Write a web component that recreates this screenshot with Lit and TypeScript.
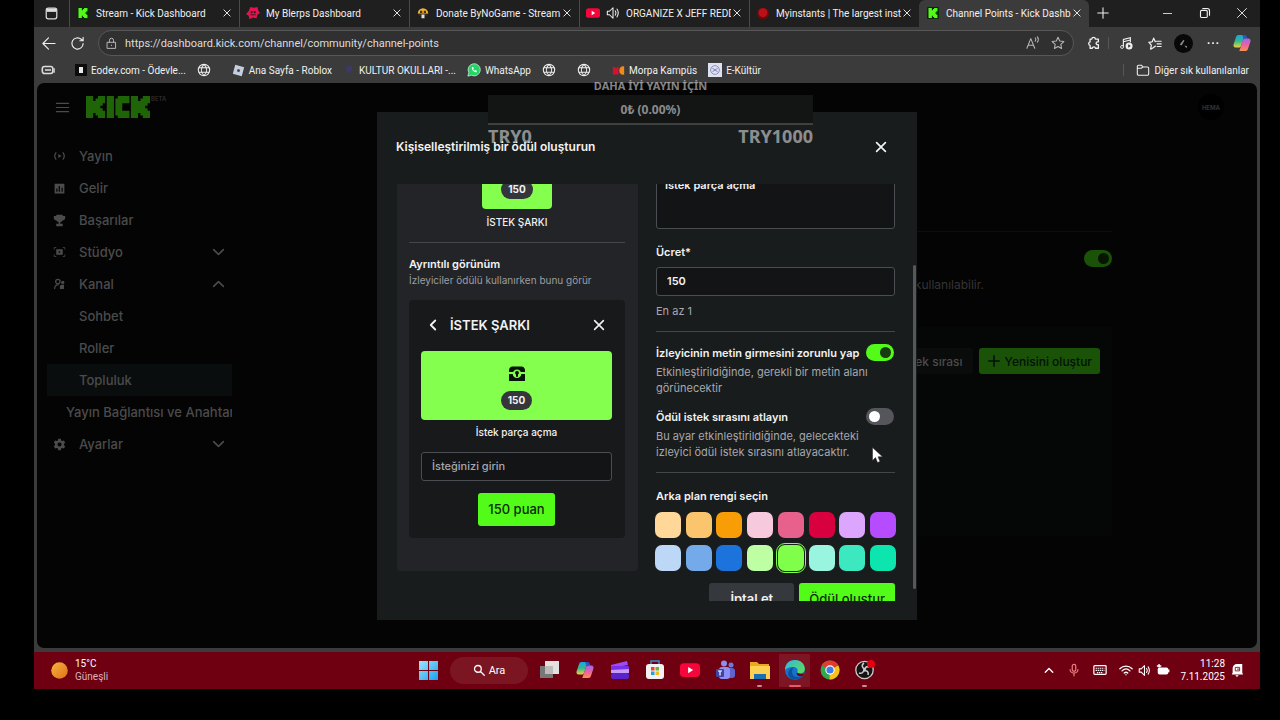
import { LitElement, html, css, svg, nothing, TemplateResult } from "lit";
import { customElement, query } from "lit/decorators.js";
import { classMap } from "lit/directives/class-map.js";

const K = "M0 0h3v2h1v-1h1v-1h3v3h-1v1h-1v1h1v1h1v3h-3v-1h-1v-1h-1v2h-3z";

const icon = (size: number, box: string, body: TemplateResult) =>
  html`<svg class="icon" width=${size} height=${size} viewBox=${box} fill="none" aria-hidden="true">${body}</svg>`;

const line = (size: number, d: string, w = 1.2) =>
  icon(size, "0 0 16 16", svg`<path d=${d} stroke="currentColor" stroke-width=${w} stroke-linecap="round" stroke-linejoin="round"/>`);

const solid = (size: number, d: string) =>
  icon(size, "0 0 16 16", svg`<path d=${d} fill="currentColor" fill-rule="evenodd"/>`);

const closeIcon = (size: number, w = 1.5) => line(size, "M3 3l10 10M13 3L3 13", w);

const kickIcon = icon(12, "0 0 12 12", svg`<rect width="12" height="12" rx="1" fill="#0b2a05"/><path transform="translate(1.500 1) scale(1.120)" d=${K} fill="#53fc18"/>`);
const blerpIcon = icon(14, "0 0 16 16", svg`<path d="M5 1l4 1 4-1 1 4 2 3-3 2-1 4-4-1-4 2-1-4-3-2 3-3z" fill="#e5134f"/><circle cx="6.500" cy="7" r="1.300" fill="#40101e"/><circle cx="10" cy="7" r="1.300" fill="#40101e"/><path d="M5 10h6" stroke="#40101e"/>`);
const donateIcon = icon(12, "0 0 16 16", svg`<path d="M1 9a7 7.500 0 0 1 14 0z" fill="#efb52e"/><path d="M1 9h14l-2 3H3z" fill="#3b2a1d"/><path d="M4 5h3v3H4zM9 5h3v3H9z" fill="#4a2c19"/><path d="M6 10h4v5H6z" fill="#e8e0d2"/>`);
const ytIcon = (s: number) => icon(s, "0 0 16 16", svg`<rect y="2.500" width="16" height="11" rx="3" fill="#f5063b"/><path d="M6.500 5.500v5l4-2.500z" fill="#fff"/>`);
const instantIcon = icon(13, "0 0 16 16", svg`<circle cx="8" cy="8" r="7.500" fill="#6d0a0e"/><circle cx="8" cy="7" r="5.500" fill="#b81119"/>`);
const globeIcon = line(14, "M1.500 8a6.500 6.500 0 1 0 13 0a6.500 6.500 0 1 0-13 0M2 5.500h12M2 10.500h12M8 1.500c-4 4-4 9 0 13c4-4 4-9 0-13", 1.2);
const copilotIcon = (s: number) => icon(s, "0 0 20 20", svg`
  <defs>
    <linearGradient id="cpa" x1="0" y1="0" x2="0" y2="1"><stop offset="0" stop-color="#18a6e8"/><stop offset=".5" stop-color="#35b98d"/><stop offset="1" stop-color="#f0d13c"/></linearGradient>
    <linearGradient id="cpb" x1="0" y1="0" x2="0" y2="1"><stop offset="0" stop-color="#9a6bf0"/><stop offset=".5" stop-color="#ee5fa3"/><stop offset="1" stop-color="#f7944c"/></linearGradient>
  </defs>
  <path d="M6 1h7l-4 12c-.5 1.500-1.500 2-3 2H3c-2 0-3-1.500-2.300-3.500l2.600-8C3.900 1.800 4.700 1 6 1z" fill="url(#cpa)"/>
  <path d="M10 1h3c1.500 0 2 1 2.400 2.300L16 5h-4z" fill="#2557c9"/>
  <path d="M14 5h3c2 0 3 1.500 2.300 3.500l-2.600 8c-.6 1.700-1.400 2.500-2.700 2.500H7l4-12c.5-1.500 1.500-2 3-2z" fill="url(#cpb)"/>`);
const chestIcon = icon(18, "0 0 18 18", svg`
  <path d="M1 7V5c.3-2 1.500-3.500 3.500-3.500h9C15.500 1.500 16.700 3 17 5v2zM1 9h16v7H1z" fill="#07140a"/>
  <circle cx="9" cy="8.800" r="4.300" fill="#84ff4d"/>
  <path d="M9 5.800a2 2 0 0 0-1 3.700v2.300h2V9.500a2 2 0 0 0-1-3.700z" fill="#07140a"/>`);

interface Tab { title: string; icon: TemplateResult; sound?: boolean; active?: boolean }
const TABS: Tab[] = [
  { title: "Stream - Kick Dashboard", icon: kickIcon },
  { title: "My Blerps Dashboard", icon: blerpIcon },
  { title: "Donate ByNoGame - Stream", icon: donateIcon },
  { title: "ORGANIZE X JEFF REDD", icon: ytIcon(14), sound: true },
  { title: "Myinstants | The largest inst", icon: instantIcon },
  { title: "Channel Points - Kick Dashb", icon: kickIcon, active: true },
];

const BOOKMARKS: { title?: string; icon: TemplateResult }[] = [
  { title: "Eodev.com - Ödevle...", icon: icon(12, "0 0 12 12", svg`<rect width="12" height="12" fill="#0d0d0d"/><path d="M4 3h4v6H4z" fill="#e9e9e9"/>`) },
  { icon: globeIcon },
  { title: "Ana Sayfa - Roblox", icon: icon(13, "0 0 16 16", svg`<path d="M4 1l11 3-3 11L1 12z" fill="#c6cede"/><path d="M7 6l3 1-1 3-3-1z" fill="#3b4252"/>`) },
  { title: "KULTUR OKULLARI -...", icon: icon(12, "0 0 12 12", svg`<path d="M3 2h6v5l-3 3-3-3z" fill="#3a3a63"/>`) },
  { title: "WhatsApp", icon: icon(14, "0 0 16 16", svg`<path d="M1 15l1-4a7 7 0 1 1 3 3z" fill="#25d366" stroke="#d8f5e2" stroke-width=".8"/><path d="M5.500 5c0 3 2.500 5.500 5.500 5.500l.5-1.500-2-1-1 .8L7 7.200l.7-1-.7-1.900z" fill="#fff"/>`) },
  { icon: globeIcon },
  { icon: globeIcon },
  { title: "Morpa Kampüs", icon: icon(13, "0 0 16 16", svg`<path d="M1 3l4 2 3-2v10H1z" fill="#d3122b"/><path d="M15 3v10c-3 1-6-1-6-5s3-6 6-5z" fill="#f08a1d"/>`) },
  { title: "E-Kültür", icon: icon(14, "0 0 16 16", svg`<rect width="16" height="16" fill="#dfe1f0"/><circle cx="8" cy="8" r="5" stroke="#8286b8"/><path d="M5 6l6 4M5 10l6-4" stroke="#6f73ac"/>`) },
];

interface NavItem { label: string; icon?: TemplateResult; arrow?: "up" | "down"; sub?: boolean; active?: boolean; long?: boolean }
const NAV: NavItem[] = [
  { label: "Yayın", icon: icon(14, "0 0 16 16", svg`<path d="M4 3.500a7 7 0 0 0 0 9M12 3.500a7 7 0 0 1 0 9" stroke="currentColor" stroke-width="1.500"/><path d="M6.500 5.500v5l4-2.500z" fill="currentColor"/>`) },
  { label: "Gelir", icon: solid(13, "M2 2h12v12H2zM4 8v4h1.500V8zM7 5v7h1.500V5zM10.500 7v5H12V7z") },
  { label: "Başarılar", icon: solid(13, "M4 1h8v1.500h3V5c0 2-1.500 3-3.500 3.200-.6 1-1.500 1.600-2.500 1.800v2h3V15H4v-3h3v-2c-1-.2-1.900-.8-2.500-1.800C2.500 8 1 7 1 5V2.500h3z") },
  { label: "Stüdyo", icon: icon(14, "0 0 16 16", svg`<path d="M1.500 5V2.500H4M12 2.500h2.500V5M14.500 11v2.500H12M4 13.500H1.500V11" stroke="currentColor"/><path fill-rule="evenodd" d="M4 4.500h8v7H4zM7 6.500v3l2.500-1.500z" fill="currentColor"/>`), arrow: "down" },
  { label: "Kanal", icon: icon(14, "0 0 16 16", svg`<circle cx="6" cy="5" r="2.700" stroke="currentColor" stroke-width="1.500"/><path d="M2 14c0-3 1.500-5 4-5h1" stroke="currentColor" stroke-width="1.500"/><circle cx="12" cy="6" r="2" fill="currentColor"/><path d="M8.500 14v-3a2 2 0 0 1 2-2h3v5z" fill="currentColor"/>`), arrow: "up" },
  { label: "Sohbet", sub: true },
  { label: "Roller", sub: true },
  { label: "Topluluk", sub: true, active: true },
  { label: "Yayın Bağlantısı ve Anahtar", long: true },
  { label: "Ayarlar", icon: solid(13, "M6.500 1h3l.5 2 1.500.8 2-.6 1.500 2.600L13.500 7.200v1.600l1.500 1.400-1.500 2.600-2-.6-1.500.8-.5 2h-3L6 13l-1.500-.8-2 .6L1 10.200l1.500-1.400V7.200L1 5.800l1.500-2.600 2 .6L6 3zM8 5.500a2.500 2.500 0 1 0 0 5a2.500 2.500 0 0 0 0-5z"), arrow: "down" },
];

const COLORS = [
  "#ffd899", "#fbc56d", "#f99d07", "#f7c9dc", "#e8608c", "#d9003f", "#dca6ff", "#b64cff",
  "#bdd7f7", "#75aaea", "#1d73dc", "#bdffa2", "#80ff4a", "#99f5df", "#3be8c0", "#0ce5ae",
];

const APPS: { name: string; icon: TemplateResult; state?: "open" | "focused" }[] = [
  { name: "Görev görünümü", icon: icon(20, "0 0 20 20", svg`<path d="M0 6h13v12H0z" fill="#777"/><path d="M5 1h14v13H5z" fill="#e3e0e0"/><path d="M5 6h8v8H5z" fill="#bdbaba"/>`) },
  { name: "Copilot", icon: copilotIcon(18) },
  { name: "Clipchamp", icon: icon(20, "0 0 20 20", svg`<path d="M1 5l16-4 1 4-11 2H1z" fill="#9c4df2"/><rect x="1" y="6" width="18" height="6" rx="1" fill="#7a2fe8"/><path d="M1 10l18-1v4H1z" fill="#c79bf7"/><rect x="1" y="13" width="18" height="6" rx="2" fill="#5a22c9"/>`) },
  { name: "Store", icon: icon(20, "0 0 20 20", svg`<path d="M6 5V1h8v4" stroke="#3b8fd0" stroke-width="1.500"/><rect x="1" y="4" width="18" height="15" rx="3" fill="#f4f1f1"/><path d="M6 7h3.500v3.500H6z" fill="#e5482d"/><path d="M10.500 7H14v3.500h-3.500z" fill="#6cb33f"/><path d="M6 11.500h3.500V15H6z" fill="#2a9de0"/><path d="M10.500 11.500H14V15h-3.500z" fill="#f5b921"/>`) },
  { name: "YouTube", icon: ytIcon(20) },
  { name: "Teams", icon: icon(20, "0 0 20 20", svg`<circle cx="9" cy="3.500" r="3" fill="#8a8ff0"/><circle cx="16" cy="5" r="2.500" fill="#7277dd"/><rect x="12" y="8" width="8" height="10" rx="3" fill="#5e63cf"/><rect x="4" y="7" width="11" height="12" rx="3" fill="#8c90f2"/><rect x="1" y="9" width="8" height="8" rx="1" fill="#3d43a8"/><path d="M3 11h4M5 11v4.500" stroke="#fff" stroke-width="1.200"/>`) },
  { name: "Dosya Gezgini", icon: icon(20, "0 0 20 20", svg`<path d="M0 2h7l2 2h10v14H0z" fill="#e9a820"/><path d="M0 6h20v13H0z" fill="#fbd053"/><path d="M4 14h12v5H4z" fill="#1b6db5"/>`), state: "open" },
  { name: "Edge", icon: icon(20, "0 0 20 20", svg`
      <defs><linearGradient id="eg" x1="0" y1="0" x2="1" y2=".6"><stop offset="0" stop-color="#2fb7e8"/><stop offset="1" stop-color="#5bd964"/></linearGradient></defs>
      <circle cx="10" cy="10" r="10" fill="#1574c9"/><path d="M0 10C0 4 4 0 10 0c7 0 11 6 9.500 10.500C18.500 13.500 14 14 12 12.500c1.500-2 .5-5-3-5.500C5 6.500 1 8 0 10z" fill="url(#eg)"/><path d="M7 12c0 4 4 6.500 10.500 4.500C13 21.500 4 20 3 14c0-3 2-6 6-7-1.500 1-2 3-2 5z" fill="#0f4fa0"/><path d="M12 12.500c-1.500 2 1.500 4.500 6 3.500l1-3c-2 1.500-5.500 1-7-.5z" fill="#6e0011"/>`), state: "focused" },
  { name: "Chrome", icon: icon(20, "0 0 20 20", svg`<circle cx="10" cy="10" r="9.500" fill="#2fa84f"/><path d="M10 10L1.700 5.300A9.500 9.500 0 0 1 18.300 5.500z" fill="#e23c2e"/><path d="M10 10l8.300-4.500A9.500 9.500 0 0 1 9.500 19.500z" fill="#fbc116"/><circle cx="10" cy="10" r="4.700" fill="#fff"/><circle cx="10" cy="10" r="3.600" fill="#3f7de8"/>`) },
  { name: "OBS", icon: icon(20, "0 0 20 20", svg`<circle cx="9.500" cy="10" r="8.700" fill="#151313" stroke="#cfcaca" stroke-width="1.300"/><path d="M9 3c-3 2-2 5 1 6M4 13c3 1 5-1 5-4M13 15c1-3-1-5-4-4M14 7c-2-1-4 0-4 3" stroke="#cfcaca" stroke-width="1.600"/><circle cx="16" cy="4" r="4" fill="#e4000f"/>`), state: "open" },
];

@customElement("app-root")
export class AppRoot extends LitElement {
  @query(".modal-body") body!: HTMLElement;

  static styles = css`
    :host {
      display: block;
      font-family: Roboto, "Noto Sans", sans-serif;
      font-size: 11px;
      color: #f0f0f0;
      background: #000;
    }
    * { box-sizing: border-box; }
    button, input, textarea { font: inherit; color: inherit; margin: 0; }
    button { border: 0; background: none; padding: 0; display: inline-flex; align-items: center; justify-content: center; }
    a { color: inherit; text-decoration: none; }
    h1, h2, p, fieldset, legend, ul { margin: 0; padding: 0; border: 0; font-size: inherit; }
    .icon { display: block; flex: none; }
    .screen { position: relative; display: flex; flex-direction: column; min-height: 100vh; padding: 0 20px 31px 34px; }

    .tabs { display: flex; height: 27px; background: #1f1f1f; align-items: stretch; }
    .tab-menu { width: 35px; flex: none; }
    .tabs button { padding-bottom: 1px; }
    .tab { flex: 0 1 170px; min-width: 0; display: flex; align-items: center; padding: 0 6px 1px; border-left: 1px solid #4a4a4a; }
    .tab .icon { width: 14px; }
    .tab > .icon { margin-right: 6px; }
    .tab.active { background: #3b3b3b; border-color: #3b3b3b; border-radius: 6px 6px 0 0; }
    .tab-title { flex: 1; min-width: 0; overflow: hidden; white-space: nowrap; font-size: 10px; }
    .tab-close { width: 12px; flex: none; }
    .new-tab { width: 28px; }
    .window-buttons { margin-left: auto; display: flex; }
    .window-buttons button { width: 37px; }

    .toolbar { display: flex; align-items: center; height: 32px; background: #3b3b3b; padding-right: 4px; }
    .tool { width: 29px; height: 28px; flex: none; }
    .nav-tools { display: flex; padding-right: 6px; }
    .address { flex: 1; min-width: 0; display: flex; align-items: center; gap: 7px; height: 26px; padding: 0 8px 0 6px; border: 1px solid #575757; border-radius: 13px; background: #303030; color: #b8b8b8; }
    .address input { flex: 1; min-width: 0; border: 0; background: none; padding: 0; outline: 0; color: #dcdcdc; font-size: 11px; }
    .address-tools { display: flex; gap: 11px; }
    .right-tools { display: flex; align-items: center; padding-left: 5px; }
    .divider-v { width: 1px; height: 12px; background: #565656; }
    .toolbar .divider-v { margin-right: 2px; }
    .avatar { width: 19px; height: 19px; border-radius: 50%; background: #080808; display: grid; place-items: center; }

    .bookmarks { display: flex; align-items: center; height: 24px; background: #3b3b3b; padding: 0 11px 2px 7px; font-size: 10px; gap: 20px; }
    .bookmark-list { display: flex; align-items: center; gap: 11px; }
    .bookmark { display: flex; align-items: center; gap: 4px; white-space: nowrap; }
    .bookmark.bare { padding-right: 10px; }
    .bookmark-rest { margin-left: auto; display: flex; align-items: center; gap: 12px; }

    .frame { flex: 1; display: flex; background: #3b3b3b; padding: 0 3px 4px; }
    .viewport { position: relative; flex: 1; min-width: 0; display: flex; flex-direction: column; background: #040404; border-radius: 7px; overflow: hidden; font-family: Inter, sans-serif; color: #4b4b4b; }
    .top { display: flex; align-items: center; gap: 16px; height: 48px; padding: 0 33px 0 18px; }
    .brand { display: flex; gap: 1px; }
    .beta { font-size: 6px; line-height: 6px; font-weight: 500; color: #333; }
    .user { margin-left: auto; width: 26px; height: 26px; border-radius: 50%; background: #000; display: grid; place-items: center; font-size: 6px; font-weight: 700; color: #333; }
    .page { flex: 1; display: flex; padding: 9px 145px 0 10px; gap: 150px; }
    .side { width: 185px; flex: none; display: flex; flex-direction: column; }
    .nav { display: flex; align-items: center; gap: 13px; height: 32px; padding: 0 6px; font-size: 13px; font-weight: 500; white-space: nowrap; overflow: hidden; flex: none; }
    .nav.sub { padding-left: 32px; }
    .nav.long { padding-left: 19px; padding-right: 0; }
    .nav.active { background: #0a0d0d; }
    .nav .icon { width: 13px; }
    .nav .arrow { margin-left: auto; width: 14px; }
    .main { flex: 1; min-width: 0; padding-top: 91px; }
    .section { border-top: 1px solid #0d0f0f; padding-top: 18px; display: grid; justify-items: end; }
    .hint { font-size: 12px; line-height: 16px; padding: 10px 128px 34px 0; color: #343434; text-align: right; }
    .rewards { display: flex; align-items: flex-start; justify-content: flex-end; gap: 6px; min-height: 209px; padding: 21px 12px; background: #050606; }
    .dim { height: 26px; padding: 0 10px; border-radius: 3px; background: #0a0b0b; font-size: 12px; font-weight: 500; }
    .dim.primary { background: #1a5207; color: #03110a; gap: 4px; padding: 0 8px; }

    .backdrop { position: absolute; inset: 0; display: grid; place-items: center; }
    .modal { position: relative; width: 540px; max-width: 100%; background: #191c1d; color: #f2f2f2; padding-bottom: 19px; }
    .modal-head { display: flex; align-items: center; justify-content: space-between; height: 72px; padding: 0 29px 2px 19px; }
    .modal-head h1 { font-size: 12px; font-weight: 600; }
    .modal-body { height: 417px; overflow-y: auto; scrollbar-width: none; display: grid; grid-template-columns: 241px 1fr; align-items: start; gap: 18px; padding: 0 22px 0 20px; }
    .thumb { position: absolute; right: 1px; top: 153px; width: 3px; height: 324px; border-radius: 2px; background: #55585a; }
    .preview { background: #232427; padding: 60px 13px 33px 12px; border-radius: 4px; display: grid; }
    .tile { height: 69px; border-radius: 4px; background: #84ff4d; display: grid; justify-items: center; align-content: end; gap: 8px; padding-bottom: 10px; }
    .tile.small { width: 70px; justify-self: center; }
    .pill { height: 19px; line-height: 19px; padding: 0 7px; border-radius: 10px; background: #35363b; font-size: 10px; font-weight: 700; }
    .reward-name { text-align: center; font-size: 10px; line-height: 16px; font-weight: 500; padding: 5px 0 12px; }
    .rule { height: 1px; background: #43464a; }
    .preview h2 { font-size: 11px; line-height: 16px; font-weight: 600; padding-top: 13px; }
    .sub-text { font-size: 10px; line-height: 16px; color: #9b9da3; padding: 0 0 12px; }
    .card { background: #18191b; border-radius: 4px; padding: 9px 13px 12px 12px; display: grid; }
    .card-head { display: flex; align-items: center; height: 32px; gap: 11px; padding: 0 6px; margin-bottom: 10px; font-size: 13px; font-weight: 600; }
    .card-head button:last-child { margin-left: auto; }
    .card-text { text-align: center; font-size: 10px; line-height: 16px; font-weight: 500; padding: 4px 0 12px; }
    .field { width: 100%; height: 29px; border: 1px solid #4a4d51; border-radius: 3px; background: #131416; padding: 0 10px; font-size: 11px; font-weight: 600; outline: 0; }
    .field::placeholder { color: #a7a8ad; opacity: 1; font-weight: 500; }
    textarea.field { display: block; height: 60px; padding: 7px 8px; line-height: 16px; resize: none; }
    .btn { height: 33px; border-radius: 3px; padding: 0 10px; font-size: 13px; font-weight: 600; background: #35383c; }
    .btn.primary { background: #53fc18; color: #0b2a05; font-weight: 500; }
    .card .btn { justify-self: center; margin-top: 12px; }

    .form { padding-top: 89px; display: grid; grid-template-columns: minmax(0, 1fr); }
    .label { font-size: 11px; line-height: 16px; font-weight: 600; white-space: nowrap; }
    .price-label { padding: 15px 0 7px; }
    .help { font-size: 11px; line-height: 16px; color: #a6a8ad; }
    .price-help { padding: 7px 0 12px; }
    .setting { position: relative; display: grid; padding-top: 12px; }
    .setting-row { display: flex; align-items: center; justify-content: space-between; height: 18px; padding-right: 1px; }
    .setting .help { padding-top: 2px; }
    .setting + .rule { margin-top: 12px; }
    .toggle { appearance: none; width: 28px; height: 17px; flex: none; border-radius: 9px; background: #54565c; padding: 3px; display: flex; }
    .toggle::before { content: ""; width: 11px; height: 11px; border-radius: 50%; background: #fff; }
    .toggle:checked { background: #53fc18; justify-content: flex-end; }
    .toggle:checked::before { background: #173a10; }
    .toggle.muted:checked { background: #1a5207; }
    .toggle.muted:checked::before { background: #071503; }
    .pointer { position: absolute; right: 12px; bottom: -3px; }
    .swatches legend { padding: 15px 0 8px; }
    .swatch-grid { display: grid; grid-template-columns: repeat(8, 26px); justify-content: space-between; row-gap: 7px; margin: 0 -1px; }
    .swatch { appearance: none; width: 26px; height: 26px; margin: 0; border-radius: 7px; }
    .swatch:checked { outline: 1px solid #80ff4a; outline-offset: 1px; }
    .actions { display: flex; justify-content: flex-end; gap: 5px; padding-top: 12px; }
    .actions .btn:first-child { padding: 0 21px; }

    .goal { position: absolute; z-index: 2; top: 77px; left: 488px; width: 325px; font-family: "Noto Sans", sans-serif; font-weight: 700; color: rgba(255, 255, 255, 0.52); text-align: center; }
    .goal-title { font-size: 11px; line-height: 18px; }
    .goal-bar { height: 30px; line-height: 30px; font-size: 12px; background: #131414; border-bottom: 2px solid #3e3f3f; }
    .goal-range { display: flex; justify-content: space-between; font-size: 18px; line-height: 22px; }

    .taskbar { display: grid; grid-template-columns: 1fr auto 1fr; align-items: center; height: 37px; background: #6e0011; padding: 0 16px 1px 15px; font-size: 10px; line-height: 13px; color: #fff; }
    .weather { display: flex; align-items: center; gap: 7px; padding-left: 2px; }
    .weather span { display: block; }
    .cond { color: #dcb3b8; }
    .apps { display: flex; align-items: center; }
    .app { position: relative; width: 35px; height: 33px; }
    .app.focused { background: linear-gradient(#7d1624, #7d1624) center / 31px 100% no-repeat; }
    .app.open::after, .app.focused::after { content: ""; position: absolute; bottom: 0; width: 5px; height: 2px; border-radius: 1px; background: #c98e95; }
    .app.focused::after { width: 12px; background: #e35c69; }
    .search { width: 78px; height: 27px; border-radius: 14px; background: #7b1522; margin: 0 4px; gap: 4px; font-size: 11px; }
    .tray { display: flex; align-items: center; justify-content: flex-end; gap: 5px; }
    .tray-group { display: flex; align-items: center; gap: 12px; padding-right: 4px; }
    .status { display: flex; align-items: center; gap: 5px; }
    .clock { text-align: right; padding-left: 1px; }
    .clock span { display: block; }
  `;

  firstUpdated() {
    this.body.scrollTop = 104;
  }

  private renderTabs() {
    return html`
      <div class="tabs">
        <button class="tab-menu" aria-label="Sekmeler">${icon(13, "0 0 16 16", svg`<rect x="1.500" y="1.500" width="13" height="13" rx="2.500" stroke="#ddd" stroke-width="1.500"/><path d="M2 2h12v4H2z" fill="#ddd"/>`)}</button>
        ${TABS.map((t) => html`
          <div class=${classMap({ tab: true, active: !!t.active })}>
            ${t.icon}${t.sound ? line(14, "M1.500 6v4h2.500l4 4V2L4 6zM10.500 5.500c1 1.500 1 3.500 0 5M12.500 3.500c2 3 2 6 0 9") : nothing}
            <span class="tab-title">${t.title}</span>
            <button class="tab-close" aria-label="Kapat">${closeIcon(10)}</button>
          </div>`)}
        <button class="new-tab" aria-label="Yeni sekme">${line(14, "M8 2v12M2 8h12")}</button>
        <div class="window-buttons">
          <button aria-label="Küçült">${line(11, "M2 8h12")}</button>
          <button aria-label="Geri yükle">${line(12, "M2 6a1.500 1.500 0 0 1 1.500-1.500h6A1.500 1.500 0 0 1 11 6v6.500A1.500 1.500 0 0 1 9.500 14h-6A1.500 1.500 0 0 1 2 12.500zM5 2h6a3 3 0 0 1 3 3v6", 1.5)}</button>
          <button aria-label="Kapat">${line(12, "M2 2l12 12M14 2L2 14")}</button>
        </div>
      </div>`;
  }

  private renderToolbar() {
    return html`
      <div class="toolbar">
        <div class="nav-tools">
          <button class="tool" aria-label="Geri">${line(15, "M15 8H2M8 2L2 8l6 6")}</button>
          <button class="tool" aria-label="Yenile">${line(15, "M14 8a6 6 0 1 1-2-4.500L14 5M14 1.500V5h-3.500")}</button>
        </div>
        <div class="address">
          ${line(13, "M3 6.500h10v7.500H3zM5.500 6.500V4a2.500 2.500 0 0 1 5 0v2.500M8 10v.5")}
          <input aria-label="Adres" value="https://dashboard.kick.com/channel/community/channel-points" />
          <div class="address-tools">
            ${line(14, "M1 14L5.500 3 10 14M2.500 10.500h6M10.500 2c1 1 1 2.500 0 4M13 1c1.500 2 1.500 4 0 6")}
            ${line(14, "M8 1.500l2 4.300 4.700.6-3.500 3.200.9 4.700L8 12l-4.100 2.300.9-4.700L1.300 6.400 6 5.800z")}
          </div>
        </div>
        <div class="right-tools">
          <button class="tool" aria-label="Uzantılar">${line(14, "M5.500 3.500a2 2 0 0 1 4 0H13v3.200h-1a1.600 1.600 0 0 0 0 3.200h1V14H9.800a2 2 0 0 0-3.900 0H3.500v-3.300a2 2 0 0 1 0-3.900V3.500z", 1.5)}</button>
          <span class="divider-v"></span>
          <button class="tool" aria-label="Medya">${icon(14, "0 0 16 16", svg`<path d="M5 12V4l8-2v5M5 6.500l8-2" stroke="currentColor" stroke-width="1.300"/><circle cx="3.500" cy="12.500" r="1.700" stroke="currentColor"/><circle cx="11.500" cy="11.500" r="4" fill="#eee"/><path d="M10.500 9.500v4l3-2z" fill="#333"/>`)}</button>
          <button class="tool" aria-label="Sık kullanılanlar">${line(14, "M8.500 11.500L6 13.500l-3 1.500.8-4.500L1 7.200l3.800-.6L6.500 2.500l1.800 4M9.500 6h5.500M10.500 9h4.500M10.500 12h4.500", 1.4)}</button>
          <button class="tool" aria-label="Profil"><span class="avatar">${icon(15, "0 0 16 16", svg`<path d="M4 9l4-5 1 1-3 5zM9 10l3 1-1 2z" fill="#8a8a8a"/>`)}</span></button>
          <button class="tool" aria-label="Menü">${icon(14, "0 0 16 16", svg`<path d="M2 8h2M7 8h2M12 8h2" stroke="currentColor" stroke-width="2"/>`)}</button>
          <button class="tool" aria-label="Copilot">${copilotIcon(18)}</button>
        </div>
      </div>
      <div class="bookmarks">
        ${icon(14, "0 0 16 16", svg`<rect x="1.500" y="4" width="12" height="8" rx="2.500" stroke="#ddd" stroke-width="1.800"/><path d="M4.500 8h7M15 6v5" stroke="#ddd" stroke-width="1.500"/>`)}
        <div class="bookmark-list">
          ${BOOKMARKS.map((b) => html`<a class=${classMap({ bookmark: true, bare: !b.title })} href="#" aria-label=${b.title ?? "Site"}>${b.icon}${b.title ? html`<span>${b.title}</span>` : nothing}</a>`)}
        </div>
        <div class="bookmark-rest">
          <span class="divider-v"></span>
          <a class="bookmark" href="#">${line(14, "M1.500 4a1.500 1.500 0 0 1 1.500-1.500h3L8 4.500h5A1.500 1.500 0 0 1 14.500 6v6.500A1.500 1.500 0 0 1 13 14H3a1.500 1.500 0 0 1-1.500-1.500zM1.500 6H6l2-1.500")}<span>Diğer sık kullanılanlar</span></a>
        </div>
      </div>`;
  }

  private renderDashboard() {
    return html`
      <div class="top">
        ${line(15, "M1.500 3.500h13M1.500 8h13M1.500 12.500h13", 1.3)}
        <div class="brand">
          <svg class="icon" width="64" height="22" viewBox="0 0 26.800 9" role="img" aria-label="KICK" fill="#206408" preserveAspectRatio="none">
            <path d=${K} /><path d="M8.700 0h3v9h-3zM13.300 0h4.900v3h-3v3h3v3h-4.900v-1h-1v-7h1z" /><path transform="translate(18.800)" d=${K} />
          </svg>
          <span class="beta">BETA</span>
        </div>
        <div class="user">HEMA</div>
      </div>
      <div class="page">
        <nav class="side">
          ${NAV.map((n) => html`
            <a href="#" class=${classMap({ nav: true, sub: !!n.sub, active: !!n.active, long: !!n.long })}>
              ${n.icon ?? nothing}<span>${n.label}</span>
              ${n.arrow ? html`<span class="arrow">${line(14, n.arrow === "up" ? "M2 11l6-6 6 6" : "M2 5l6 6 6-6", 2)}</span>` : nothing}
            </a>`)}
        </nav>
        <div class="main">
          <div class="section"><input class="toggle muted" type="checkbox" checked aria-label="Kanal puanları" /></div>
          <p class="hint">kullanılabilir.</p>
          <div class="rewards">
            <button class="dim">İstek sırası</button>
            <button class="dim primary">${line(14, "M8 2v12M2 8h12", 1.8)}Yenisini oluştur</button>
          </div>
        </div>
      </div>`;
  }

  private renderModal() {
    return html`
      <div class="backdrop">
        <div class="modal" role="dialog" aria-labelledby="dialog-title">
          <div class="modal-head">
            <h1 id="dialog-title">Kişiselleştirilmiş bir ödül oluşturun</h1>
            <button aria-label="Kapat">${closeIcon(14, 2)}</button>
          </div>
          <div class="modal-body">
            <div class="preview">
              <div class="tile small"><span class="pill">150</span></div>
              <p class="reward-name">İSTEK ŞARKI</p>
              <div class="rule"></div>
              <h2>Ayrıntılı görünüm</h2>
              <p class="sub-text">İzleyiciler ödülü kullanırken bunu görür</p>
              <div class="card">
                <div class="card-head">
                  <button aria-label="Geri">${line(12, "M11 2L5 8l6 6", 2.4)}</button>
                  <span>İSTEK ŞARKI</span>
                  <button aria-label="Kapat">${closeIcon(14, 1.8)}</button>
                </div>
                <div class="tile">${chestIcon}<span class="pill">150</span></div>
                <p class="card-text">İstek parça açma</p>
                <input class="field" placeholder="İsteğinizi girin" aria-label="İsteğinizi girin" />
                <button class="btn primary">150 puan</button>
              </div>
            </div>
            <form class="form">
              <textarea class="field" aria-label="Açıklama" .value=${"İstek parça açma"}></textarea>
              <label class="label price-label" for="price">Ücret*</label>
              <input class="field" id="price" value="150" />
              <p class="help price-help">En az 1</p>
              <div class="rule"></div>
              <div class="setting">
                <div class="setting-row">
                  <label class="label" for="require-text">İzleyicinin metin girmesini zorunlu yap</label>
                  <input class="toggle" id="require-text" type="checkbox" checked />
                </div>
                <p class="help">Etkinleştirildiğinde, gerekli bir metin alanı görünecektir</p>
              </div>
              <div class="setting">
                <div class="setting-row">
                  <label class="label" for="skip-queue">Ödül istek sırasını atlayın</label>
                  <input class="toggle" id="skip-queue" type="checkbox" />
                </div>
                <p class="help">Bu ayar etkinleştirildiğinde, gelecekteki<br />izleyici ödül istek sırasını atlayacaktır.</p>
                <svg class="pointer" width="11" height="16" viewBox="0 0 11 16" aria-hidden="true"><path d="M.5.5v13l3-3 2 5 2.500-1-2-4.700h4.500z" fill="#fff" stroke="#222" stroke-width=".5"/></svg>
              </div>
              <div class="rule"></div>
              <fieldset class="swatches">
                <legend class="label">Arka plan rengi seçin</legend>
                <div class="swatch-grid">
                  ${COLORS.map((c, i) => html`<input class="swatch" type="radio" name="color" aria-label=${c} style="background:${c}" ?checked=${i === 12} />`)}
                </div>
              </fieldset>
              <div class="actions">
                <button class="btn" type="button">İptal et</button>
                <button class="btn primary" type="button">Ödül oluştur</button>
              </div>
            </form>
          </div>
          <div class="thumb"></div>
        </div>
      </div>`;
  }

  private renderTaskbar() {
    return html`
      <div class="taskbar">
        <div class="weather">
          ${icon(17, "0 0 16 16", svg`<defs><linearGradient id="sun" x1="0" y1="0" x2="1" y2="1"><stop offset="0" stop-color="#f6b53c"/><stop offset="1" stop-color="#e0701c"/></linearGradient></defs><circle cx="8" cy="8" r="7.800" fill="url(#sun)"/>`)}
          <div><span>15°C</span><span class="cond">Güneşli</span></div>
        </div>
        <div class="apps">
          <button class="app" aria-label="Başlat">${icon(19, "0 0 19 19", svg`<defs><linearGradient id="win" x1="0" y1="0" x2="1" y2="1"><stop offset="0" stop-color="#9be6fb"/><stop offset="1" stop-color="#1c9df0"/></linearGradient></defs><path d="M0 0h9v9H0zM10 0h9v9h-9zM0 10h9v9H0zM10 10h9v9h-9z" fill="url(#win)"/>`)}</button>
          <button class="search">${line(12, "M11 6.500a4.500 4.500 0 1 1-9 0a4.500 4.500 0 1 1 9 0M10 10l5 5", 1.7)}<span>Ara</span></button>
          ${APPS.map((a) => html`<button class="app ${a.state ?? ""}" aria-label=${a.name}>${a.icon}</button>`)}
        </div>
        <div class="tray">
          <div class="tray-group">
            ${line(12, "M3 11l5-5 5 5", 1.8)}
            ${icon(14, "0 0 16 16", svg`<g stroke="#ee7a80" stroke-width="1.400"><rect x="6" y="1.500" width="4" height="8" rx="2"/><path d="M3.500 7c0 6 9 6 9 0M8 12v3"/></g>`)}
            ${icon(14, "0 0 16 16", svg`<rect x="1" y="3" width="14" height="10" rx="1" stroke="#fff" stroke-width="1.400"/><path d="M3 6h10M3 8.500h10M4.500 11h7" stroke="#fff" stroke-width="1.300" stroke-dasharray="1.500 .8"/>`)}
            <div class="status">
              ${line(14, "M1 6.500c4-4 10-4 14 0M3.500 9c3-3 6-3 9 0M6 11.500c1.500-1.300 2.500-1.300 4 0M8 13.300v.2", 1.5)}
              ${line(13, "M1.500 6v4h2.500l4 4V2L4 6zM10.500 5.500c1 1.500 1 3.500 0 5M12.500 3.500c2 3 2 6 0 9", 1.3)}
              ${icon(14, "0 0 16 16", svg`<rect x="2" y="5" width="12" height="8" rx="2" fill="#fff"/><path d="M14.500 7.500v3M3.500 1v4M1 3.500h5" stroke="#fff" stroke-width="1.600"/>`)}
            </div>
          </div>
          <div class="clock"><span>11:28</span><span>7.11.2025</span></div>
          ${icon(14, "0 0 16 16", svg`<path d="M3 11V6a5 5 0 0 1 5-5h6v10l1 2H2zM6 14h4l-2 2z" fill="#fff"/><path d="M6 5h5v4H6zM8 7h3" stroke="#7a1522"/>`)}
        </div>
      </div>`;
  }

  render() {
    return html`
      <div class="screen">
        ${this.renderTabs()}${this.renderToolbar()}
        <div class="frame"><div class="viewport">${this.renderDashboard()}${this.renderModal()}</div></div>
        ${this.renderTaskbar()}
        <div class="goal">
          <div class="goal-title">DAHA İYİ YAYIN İÇİN</div>
          <div class="goal-bar">0₺ (0.00%)</div>
          <div class="goal-range"><span>TRY0</span><span>TRY1000</span></div>
        </div>
      </div>`;
  }
}
